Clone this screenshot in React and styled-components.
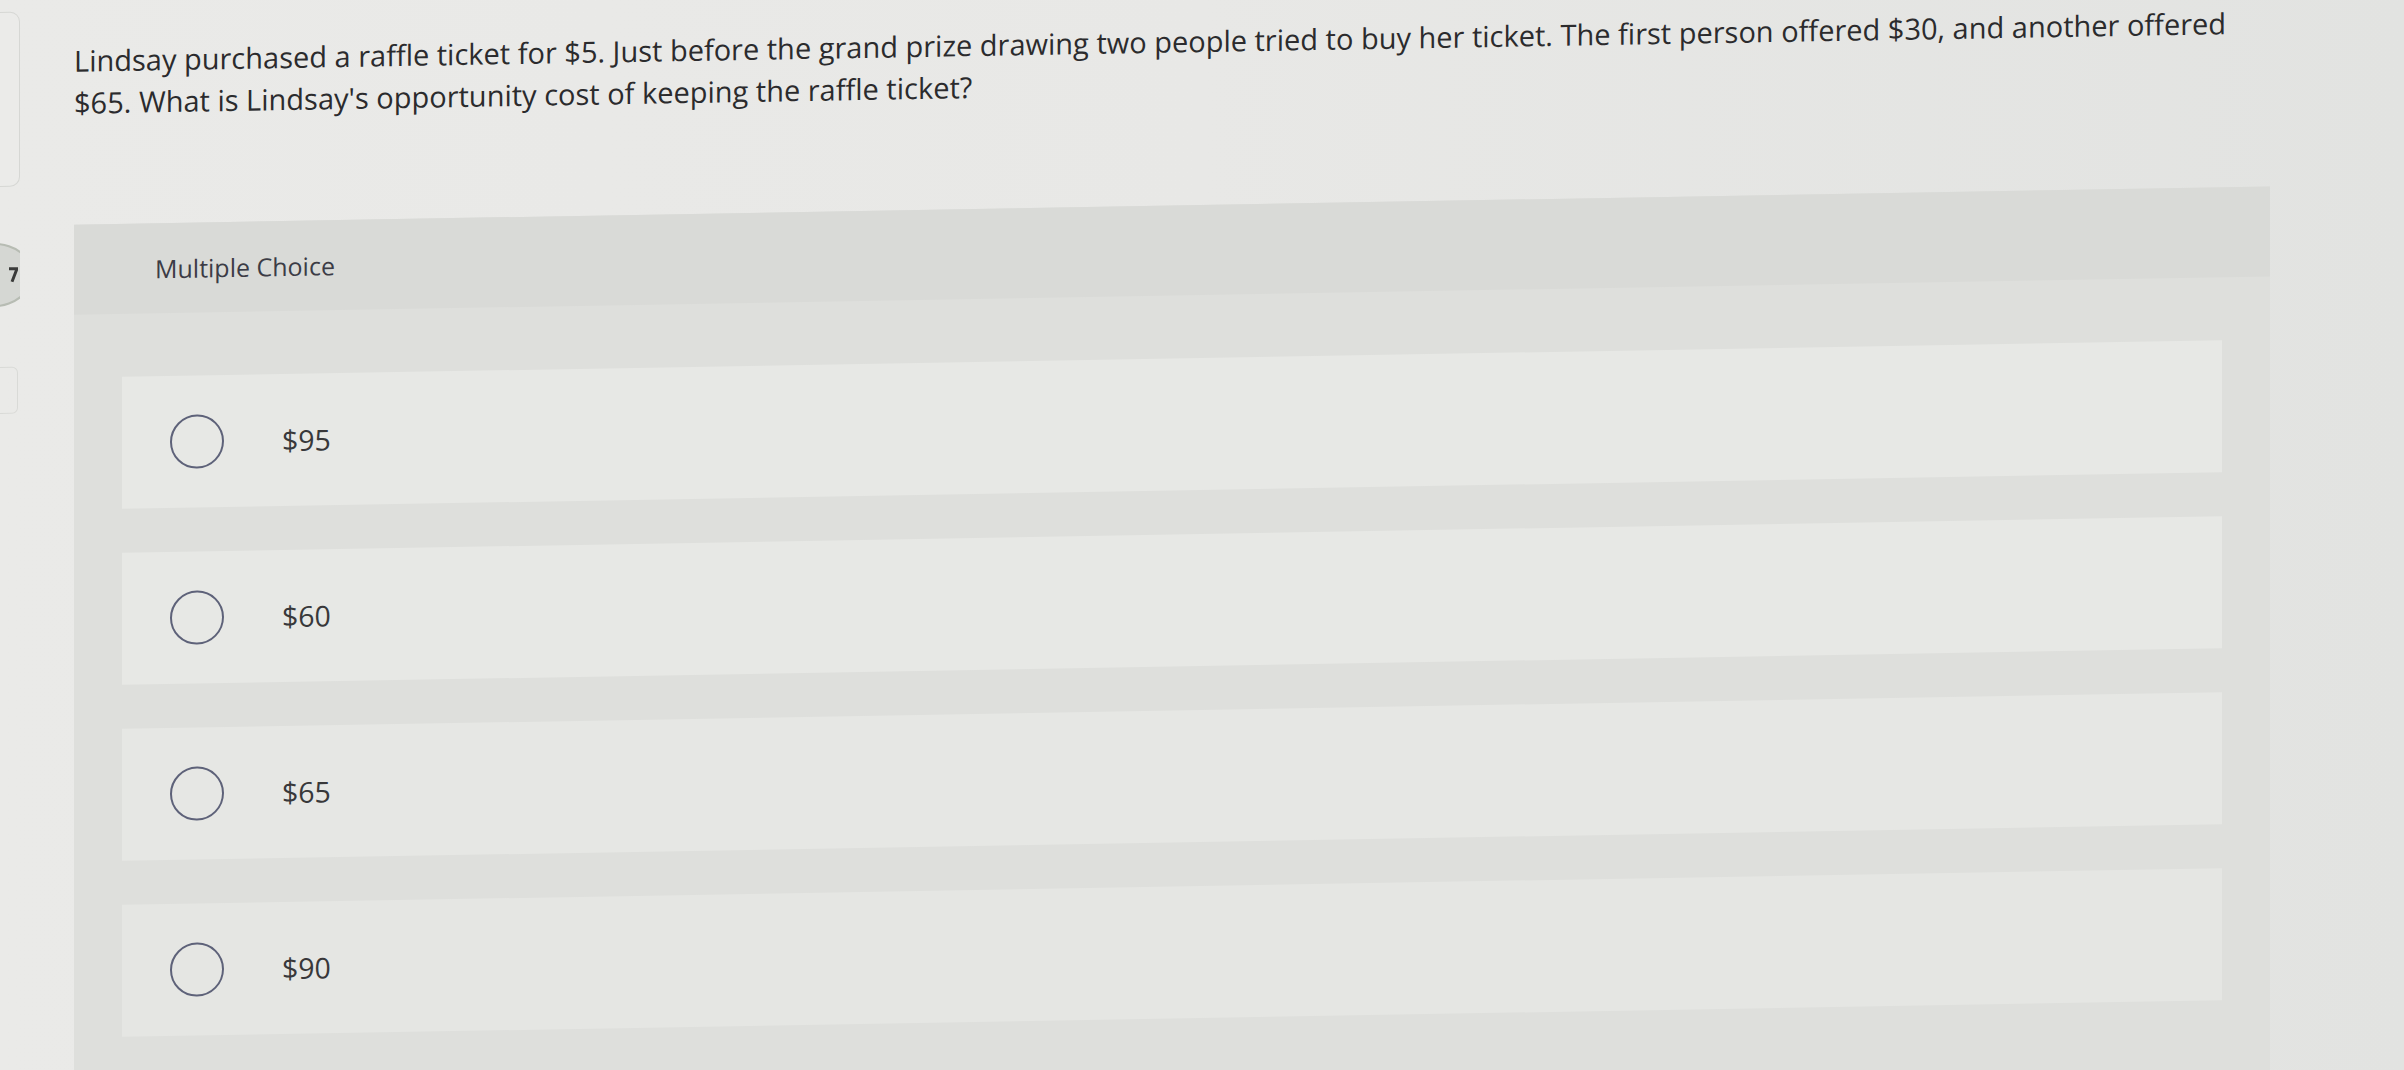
import React from 'react'
import styled, { createGlobalStyle } from 'styled-components'

const GlobalStyle = createGlobalStyle`
  html, body {
    margin: 0;
    padding: 0;
    height: 1070px;
    overflow: hidden;
    background: linear-gradient(90deg, #eaeae8 0%, #e8e8e6 50%, #e2e3e1 100%);
    font-family: "Open Sans", Lato, sans-serif;
  }
`;

const Page = styled.div`
  display: flex;
  align-items: flex-start;
  width: 2404px;
  transform: skewY(-1deg);
  transform-origin: 0 0;
`;

const Rail = styled.div`
  width: 20px;
  flex-shrink: 0;
  overflow: hidden;
  display: flex;
  flex-direction: column;
  padding-top: 12px;
`;

const RailPanel = styled.div`
  margin-left: -40px;
  width: 58px;
  height: 173px;
  border: 1.5px solid #d6d7d4;
  border-radius: 10px;
  background: #ebebe9;
`;

const RailButton = styled.div`
  margin-left: -44px;
  margin-top: 56px;
  width: 60px;
  height: 60px;
  border-radius: 50%;
  border: 2px solid #b7bcb3;
  background: #d5d7d3;
  display: flex;
  align-items: center;
  justify-content: flex-end;
  padding-right: 13px;
  box-sizing: content-box;
`;

const RailBox = styled.div`
  margin-left: -40px;
  margin-top: 60px;
  width: 56px;
  height: 45px;
  border: 1.5px solid #d9dad7;
  border-radius: 6px;
`;

const Main = styled.main`
  margin-left: 54px;
  padding-top: 41px;
  display: flex;
  flex-direction: column;
`;

const Question = styled.p`
  margin: 0;
  font-size: 29px;
  line-height: 42px;
  color: #2b2b2d;
  white-space: nowrap;
`;

const Card = styled.section`
  margin-top: 101px;
  width: 2196px;
  background: #dedfdc;
  padding-bottom: 120px;
`;

const CardHeader = styled.header`
  height: 90px;
  display: flex;
  align-items: center;
  padding-left: 81px;
  background: #d9dad7;
  font-size: 25px;
  color: #3c3c46;
`;

const Options = styled.div`
  display: flex;
  flex-direction: column;
  gap: 44px;
  padding: 63px 48px 0;
`;

const Option = styled.label`
  height: 132px;
  display: flex;
  align-items: center;
  padding-left: 48px;
  background: ${p => p.$tone};
  cursor: pointer;
`;

const Radio = styled.span`
  width: 50px;
  height: 50px;
  border-radius: 50%;
  border: 2.5px solid #5e6279;
  flex-shrink: 0;
`;

const OptionText = styled.span`
  margin-left: 58px;
  font-size: 28.5px;
  color: #38383a;
`;

const options = [
  { value: '$95', tone: '#e7e8e5' },
  { value: '$60', tone: '#e7e8e5' },
  { value: '$65', tone: '#e6e7e4' },
  { value: '$90', tone: '#e5e6e3' },
];

export default function App() {
  return (
    <>
      <GlobalStyle />
      <Page>
        <Rail>
          <RailPanel />
          <RailButton>
            <svg width="9" height="16" viewBox="0 0 9 16">
              <path d="M0 2 H8 L3 15" fill="none" stroke="#3a3b3a" strokeWidth="3" />
            </svg>
          </RailButton>
          <RailBox />
        </Rail>
        <Main>
          <Question>
            Lindsay purchased a raffle ticket for $5. Just before the grand prize drawing two people tried to buy her ticket. The first person offered $30, and another offered
            <br />
            $65. What is Lindsay's opportunity cost of keeping the raffle ticket?
          </Question>
          <Card>
            <CardHeader>Multiple Choice</CardHeader>
            <Options>
              {options.map(o => (
                <Option key={o.value} $tone={o.tone}>
                  <Radio />
                  <OptionText>{o.value}</OptionText>
                </Option>
              ))}
            </Options>
          </Card>
        </Main>
      </Page>
    </>
  );
}
